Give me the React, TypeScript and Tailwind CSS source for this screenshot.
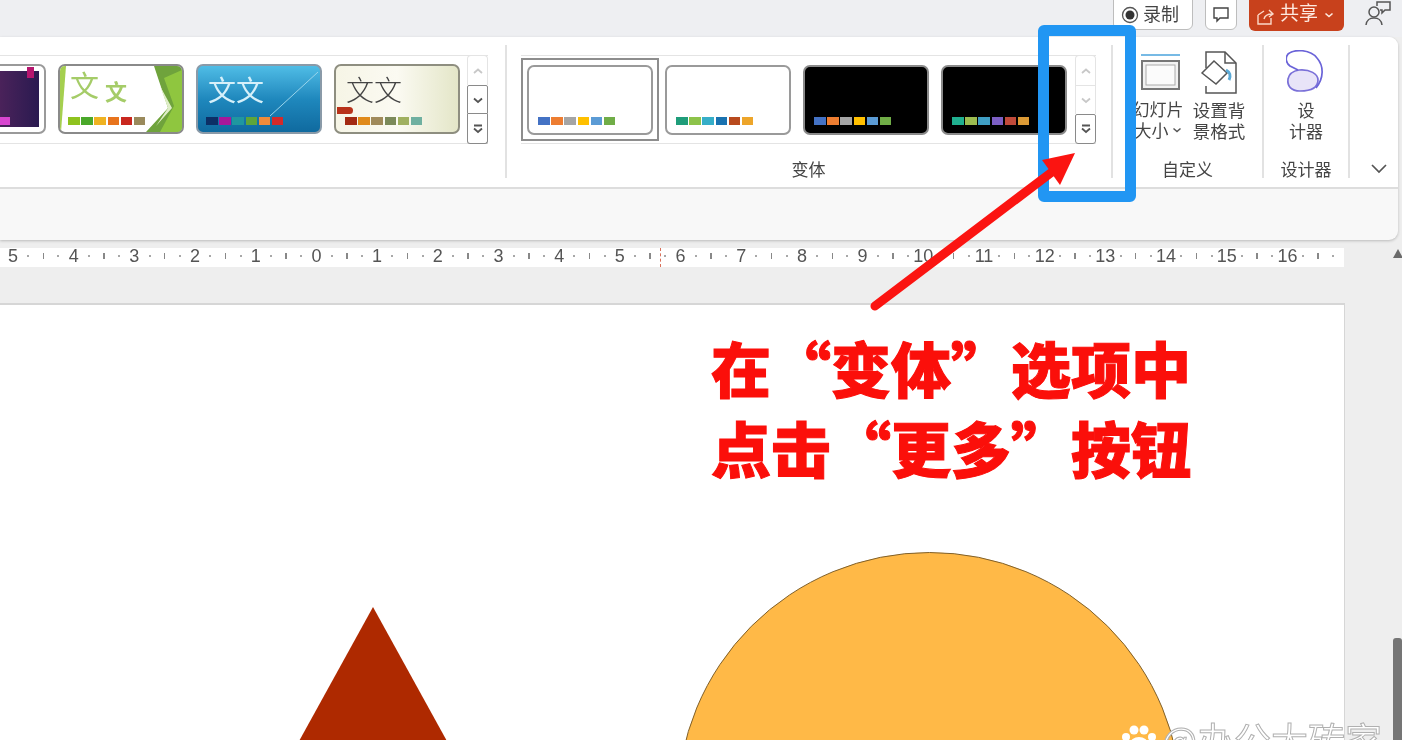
import React from 'react';

const cjk = "font-['Noto_Sans_CJK_SC','Noto_Sans',sans-serif]";

function Swatches({ colors, className }: { colors: string[]; className: string }) {
  return (
    <div className={`absolute flex ${className}`}>
      {colors.map((c, i) => (
        <div key={i} className="h-[8px] w-[11.5px] mr-[1.7px]" style={{ backgroundColor: c }} />
      ))}
    </div>
  );
}

function Thumb({ className, children }: { className: string; children?: React.ReactNode }) {
  return (
    <div className={`relative h-[70px] w-[126px] shrink-0 overflow-hidden rounded-[7px] border-2 ${className}`}>
      {children}
    </div>
  );
}

function Chevron({ dir, dim }: { dir: 'up' | 'down' | 'more'; dim?: boolean }) {
  const stroke = dim ? '#c8c8c8' : '#555555';
  return (
    <svg width="12" height="12" viewBox="0 0 12 12" fill="none" stroke={stroke} strokeWidth="1.8">
      {dir === 'up' && <path d="M2 8 L6 4.5 L10 8" />}
      {dir === 'down' && <path d="M2 4.5 L6 8 L10 4.5" />}
      {dir === 'more' && (
        <>
          <path d="M2 2.5 H10" />
          <path d="M2 5.5 L6 9 L10 5.5" />
        </>
      )}
    </svg>
  );
}

function ScrollCol({ active }: { active: boolean }) {
  return (
    <div className="flex h-[89px] w-[21px] shrink-0 flex-col">
      <div className="flex h-[30px] items-center justify-center rounded-t-[4px] border border-b-0 border-[#e4e4e4]">
        <Chevron dir="up" dim />
      </div>
      <div
        className={`flex h-[29px] items-center justify-center border ${active ? 'rounded-t-[2px] border-[#8a8a8a]' : 'border-[#e4e4e4] border-b-0'}`}
      >
        <Chevron dir="down" dim={!active} />
      </div>
      <div
        className={`flex h-[30px] items-center justify-center rounded-b-[3px] border border-[#8a8a8a] ${active ? 'border-t-0' : 'rounded-t-[2px]'}`}
      >
        <Chevron dir="more" />
      </div>
    </div>
  );
}

function Sep({ className }: { className: string }) {
  return <div className={`mt-[8px] h-[133px] w-[2px] shrink-0 bg-[#e2e2e2] ${className}`} />;
}

function Variant({ black, colors, selected }: { black?: boolean; colors: string[]; selected?: boolean }) {
  return (
    <div
      className={`flex h-[83px] w-[138px] shrink-0 items-center justify-center ${selected ? 'border-2 border-double border-[#8d8d8d]' : ''}`}
    >
      <Thumb className={black ? 'border-[#8a8a8a] bg-black' : 'border-[#9a9a9a] bg-white'}>
        <Swatches colors={colors} className="left-[9px] top-[50px]" />
      </Thumb>
    </div>
  );
}

function Ruler() {
  const nums = [5, 4, 3, 2, 1, 0, 1, 2, 3, 4, 5, 6, 7, 8, 9, 10, 11, 12, 13, 14, 15, 16];
  return (
    <div className="relative mt-[8px] flex h-[19px] w-[1344px] items-center bg-white pb-[4px] pl-[5.4px] font-['Liberation_Sans',sans-serif] text-[18px] leading-[16px] text-[#555555]">
      {nums.map((n, i) => (
        <div key={i} className="grid h-[15px] w-[60.7px] shrink-0 grid-cols-4 items-center">
          <span className="flex justify-center whitespace-nowrap">{n}</span>
          <span className="mx-auto h-[2px] w-[2px] bg-[#a8a8a8]" />
          <span className="mx-auto h-[6px] w-[1.5px] bg-[#888888]" />
          <span className="mx-auto h-[2px] w-[2px] bg-[#a8a8a8]" />
        </div>
      ))}
      <div className="absolute left-[660px] top-0 h-full border-l border-dashed border-[#d9705a]" />
    </div>
  );
}

export default function App() {
  return (
    <div
      lang="zh-CN"
      className={`relative flex h-[740px] w-[1402px] flex-col overflow-hidden bg-[#eeeeee] ${cjk} [filter:blur(0.6px)]`}
    >
      {/* title bar */}
      <div className="flex h-[37px] shrink-0 items-start justify-end bg-[#eeeff2] pr-[10px]">
        <div className="mt-[-2px] flex h-[32px] w-[80px] items-center gap-[4px] rounded-b-[6px] border border-[#bdbdbd] bg-white pl-[7px] text-[18px] leading-[22px] text-[#444444]">
          <svg width="18" height="18" viewBox="0 0 18 18" className="mt-[2px] shrink-0">
            <circle cx="9" cy="9" r="7.5" fill="none" stroke="#555555" strokeWidth="1.3" />
            <circle cx="9" cy="9" r="4.5" fill="#333333" />
          </svg>
          <span className="mt-[-3px]">录制</span>
        </div>
        <div className="ml-[12px] mt-[-2px] flex h-[32px] w-[32px] items-center justify-center rounded-b-[6px] border border-[#bdbdbd] bg-white">
          <svg width="18" height="18" viewBox="0 0 18 18" fill="none" stroke="#444444" strokeWidth="1.4">
            <path d="M2 3 H16 V13 H8 L5 16 V13 H2 Z" />
          </svg>
        </div>
        <div className="ml-[12px] mt-[-2px] flex h-[33px] w-[95px] items-center rounded-b-[6px] bg-[#c8411c] pl-[6px] text-[19px] leading-[22px] text-[#fde9df]">
          <svg width="20" height="20" viewBox="0 0 20 20" fill="none" stroke="#fbd9c9" strokeWidth="1.4" className="mr-[5px] mt-[2px] shrink-0">
            <path d="M3 9 V18 H16 V12 M3 9 L9 5 M9 13 C10 9 13 8 17 8 M14 4 L18 8 L14 11" />
          </svg>
          <span className="mt-[-5px]">共享</span>
          <svg width="10" height="10" viewBox="0 0 10 10" fill="none" stroke="#fde9df" strokeWidth="1.6" className="ml-[6px] mt-[1px]">
            <path d="M1.5 3.5 L5 6.5 L8.5 3.5" />
          </svg>
        </div>
        <svg width="28" height="28" viewBox="0 0 28 28" fill="none" stroke="#555555" strokeWidth="1.5" className="ml-[20px]">
          <circle cx="10" cy="12" r="5" />
          <path d="M2 25 C3 19 6 18 10 18 C14 18 17 19 18 25" />
          <path d="M13 6 V2 H26 V10 H21 L18 13 V10 H16" />
        </svg>
      </div>

      {/* ribbon */}
      <div className="mr-[4px] flex h-[203px] shrink-0 flex-col overflow-hidden rounded-r-[9px] bg-[#f8f8f8] shadow-[0_1px_3px_rgba(0,0,0,0.22)]">
        <div className="flex h-[152px] shrink-0 border-b-2 border-[#dddddd] bg-white">
          {/* theme gallery */}
          <div className="ml-[-92px] mt-[18px] flex h-[89px] shrink-0 items-start border-y border-[#e4e4e4]">
            <div className="flex gap-[12px] pl-[12px] pt-[8px]">
              <Thumb className="border-[#9a9a9a] bg-white">
                <div className="absolute inset-x-[5px] inset-y-[5px] bg-gradient-to-r from-[#8a2a6c] to-[#2a1a50]" />
                <div className="absolute right-[10px] top-[1px] h-[11px] w-[7px] bg-[#b5156e]" />
                <div className="absolute left-[78px] top-[51px] h-[8px] w-[10px] bg-[#d845d0]" />
              </Thumb>
              <Thumb className="border-[#8a8a8a] bg-white">
                <svg viewBox="0 0 122 66" className="absolute inset-0 h-full w-full">
                  <path d="M0 0 H6 L1 66 H0 Z" fill="#a5cf4f" />
                  <path d="M94 0 H122 V66 H86 L108 42 Z" fill="#6fa33c" />
                  <path d="M100 66 L114 40 L104 12 L122 4 V66 Z" fill="#8fc63f" />
                  <path d="M96 60 L108 42 L100 20 L112 42 Z" fill="#dfeec8" />
                </svg>
                <div className="absolute left-[10px] top-[1px] text-[29px] leading-[34px] text-[#a5cc68]">文</div>
                <div className="absolute left-[45px] top-[9px] text-[22px] font-bold leading-[30px] text-[#a5cc68]">文</div>
                <Swatches colors={['#8fc31f', '#4aa82a', '#efb322', '#e8741d', '#c9281f', '#9a8a5c']} className="left-[8px] top-[51px]" />
              </Thumb>
              <Thumb className="border-[#8a9aa8] bg-gradient-to-b from-[#4fbde6] via-[#1f88bd] to-[#0f6a9f]">
                <svg viewBox="0 0 122 66" className="absolute inset-0 h-full w-full">
                  <path d="M72 50 L120 6" stroke="#9ad5ec" strokeWidth="1" fill="none" />
                </svg>
                <div className="absolute left-[10px] top-[6px] whitespace-nowrap text-[28px] leading-[34px] text-[#d6f0fa]">文文</div>
                <Swatches colors={['#0c2f66', '#a7189a', '#1f97a0', '#5ea53a', '#ef8b3a', '#d42a2a']} className="left-[8px] top-[51px]" />
              </Thumb>
              <Thumb className="border-[#8e8e80] bg-gradient-to-r from-[#f6f5e6] via-[#fbfaf2] to-[#e4e6c8]">
                <div className="absolute left-[10px] top-[6px] whitespace-nowrap text-[28px] font-light leading-[34px] text-[#444444]">文文</div>
                <div className="absolute left-[1px] top-[41px] h-[7px] w-[16px] rounded-r-[4px] bg-[#b8321a]" />
                <Swatches colors={['#a32a12', '#e08a1a', '#a08a5a', '#7c8a5a', '#a0b060', '#6fb0a0']} className="left-[9px] top-[51px]" />
              </Thumb>
            </div>
            <div className="ml-[7px] mt-[-1px]">
              <ScrollCol active />
            </div>
          </div>

          <Sep className="ml-[17px]" />

          {/* variant gallery */}
          <div className="ml-[14px] flex w-[575px] shrink-0 flex-col">
            <div className="mt-[18px] flex h-[89px] items-center border-y border-[#e4e4e4]">
              <Variant selected colors={['#4472c4', '#ed7d31', '#a5a5a5', '#ffc000', '#5b9bd5', '#70ad47']} />
              <Variant colors={['#1f9d7a', '#8dc34a', '#36aec8', '#1a72b0', '#b84a1e', '#eda52a']} />
              <Variant black colors={['#4472c4', '#ed7d31', '#a5a5a5', '#ffc000', '#5b9bd5', '#70ad47']} />
              <Variant black colors={['#20b090', '#9cbc50', '#3f9ec4', '#7c5fc4', '#c04a3a', '#dc9a35']} />
              <div className="ml-[2px]">
                <ScrollCol active={false} />
              </div>
            </div>
            <div className="mt-[13px] text-center text-[17px] leading-[24px] text-[#444444]">变体</div>
          </div>

          <Sep className="ml-[15px]" />

          {/* custom */}
          <div className="flex w-[149px] shrink-0 flex-col">
            <div className="flex h-[107px]">
              <div className="ml-[18px] flex w-[54px] flex-col items-center">
                <svg width="44" height="38" viewBox="0 0 44 38" fill="none" className="ml-[3px] mt-[16px]">
                  <path d="M3 2 H42" stroke="#4aa3dc" strokeWidth="1.5" />
                  <rect x="4" y="8" width="37" height="28" fill="#f2f2f2" stroke="#777777" strokeWidth="2" />
                  <rect x="8" y="12" width="29" height="20" fill="#fbfbfb" stroke="#aaaaaa" strokeWidth="1" />
                </svg>
                <div className="mt-[7px] flex flex-col items-center whitespace-nowrap text-[17px] leading-[21px] text-[#444444]">
                  <span>幻灯片</span>
                  <span className="flex items-center">
                    大小
                    <svg width="10" height="10" viewBox="0 0 10 10" fill="none" stroke="#555555" strokeWidth="1.5" className="ml-[3px]">
                      <path d="M1.5 3.5 L5 6.5 L8.5 3.5" />
                    </svg>
                  </span>
                </div>
              </div>
              <div className="ml-[6px] flex w-[56px] flex-col items-center">
                <svg width="38" height="44" viewBox="0 0 38 44" fill="none" className="mt-[13px]">
                  <path d="M6 18 V2 H25 L36 13 V43 H6 V36" stroke="#555555" strokeWidth="1.5" />
                  <path d="M25 2 V13 H36" stroke="#555555" strokeWidth="1.5" />
                  <path d="M2 23 L14 11 L27 23 L16 34 Z" fill="#ffffff" stroke="#555555" strokeWidth="1.5" />
                  <path d="M26 20 C30 22 31 26 29 30" stroke="#5aa9d6" strokeWidth="3" />
                </svg>
                <div className="mt-[5px] flex flex-col items-center whitespace-nowrap text-[17.5px] leading-[21px] text-[#444444]">
                  <span>设置背</span>
                  <span>景格式</span>
                </div>
              </div>
            </div>
            <div className="mt-[13px] text-center text-[17px] leading-[24px] text-[#444444]">自定义</div>
          </div>

          <Sep className="" />

          {/* designer */}
          <div className="flex w-[84px] shrink-0 flex-col items-center">
            <div className="flex h-[107px] flex-col items-center">
              <svg width="40" height="44" viewBox="0 0 40 44" fill="none" className="mt-[13px]">
                <path d="M13 20 C24 19 32 24 32 30 C32 38 24 41 14 41 C5 41 1 36 2 29 C3 24 7 21 13 20 Z" fill="#e8e4f8" stroke="#7a70d8" strokeWidth="1.7" />
                <path d="M30 38 C38 28 38 16 31 8 C24 -1 8 -1 2 4 C-1 8 0 13 4 16 L12 20" stroke="#6a63d8" strokeWidth="1.7" />
              </svg>
              <div className="mt-[5px] flex flex-col items-center text-[17px] leading-[21px] text-[#444444]">
                <span>设</span>
                <span>计器</span>
              </div>
            </div>
            <div className="mt-[13px] text-[17px] leading-[24px] text-[#444444]">设计器</div>
          </div>

          <Sep className="" />

          <div className="flex flex-1 items-end justify-center pb-[12px] pl-[10px]">
            <svg width="18" height="12" viewBox="0 0 18 12" fill="none" stroke="#555555" strokeWidth="1.7">
              <path d="M2 2 L9 9 L16 2" />
            </svg>
          </div>
        </div>
      </div>

      <Ruler />

      {/* canvas */}
      <div className="mt-[36px] flex min-h-0 flex-1">
        <div className="relative w-[1345px] shrink-0 overflow-hidden border-r border-t-2 border-[#d6d6d6] bg-white">
          <svg width="160" height="140" viewBox="0 0 160 140" className="absolute left-[293px] top-[301px]">
            <path d="M80 1 L5 137 H155 Z" fill="#ae2900" />
          </svg>
          <div className="absolute left-[677px] top-[247px] h-[505px] w-[505px] rounded-full border-[1.5px] border-[#80602a] bg-[#ffb947]" />
        </div>
      </div>

      {/* scrollbar */}
      <svg width="10" height="10" viewBox="0 0 10 10" className="absolute left-[1393px] top-[248px]">
        <path d="M0 10 L5 1 L10 10 Z" fill="#6a6a6a" />
      </svg>
      <div className="absolute left-[1393px] top-[638px] h-[102px] w-[9px] rounded-t-[3px] bg-[#757575]" />

      {/* annotation */}
      <div className="absolute left-[1038px] top-[25px] h-[177px] w-[98px] rounded-[6px] border-[11px] border-[#2196f3]" />
      <svg width="1402" height="740" viewBox="0 0 1402 740" className="pointer-events-none absolute left-0 top-0">
        <path d="M875 306 L1052 172" stroke="#fb1411" strokeWidth="9" strokeLinecap="round" fill="none" />
        <path d="M1075 153 L1042 160 L1060 185 Z" fill="#fb1411" />
      </svg>
      <div className="absolute left-[711px] top-[327px] whitespace-nowrap text-[60px] font-black leading-[80px] text-[#fb0f0a] [-webkit-text-stroke:1px_#fb0f0a]">
        在“变体”选项中
        <br />
        点击“更多”按钮
      </div>

      {/* watermark */}
      <svg width="36" height="30" viewBox="0 0 36 30" className="absolute left-[1120px] top-[724px]">
        <circle cx="6" cy="13" r="4" fill="#ffffff" />
        <circle cx="14" cy="6" r="4.5" fill="#ffffff" />
        <circle cx="24" cy="6" r="4.5" fill="#ffffff" />
        <circle cx="32" cy="13" r="4" fill="#ffffff" />
        <ellipse cx="19" cy="20" rx="9" ry="7" fill="#ffffff" />
      </svg>
      <div className="absolute left-[1162px] top-[714px] whitespace-nowrap text-[37px] leading-[50px] text-white [-webkit-text-stroke:1px_#b0b0b0]">
        @办公大砖家
      </div>
    </div>
  );
}
